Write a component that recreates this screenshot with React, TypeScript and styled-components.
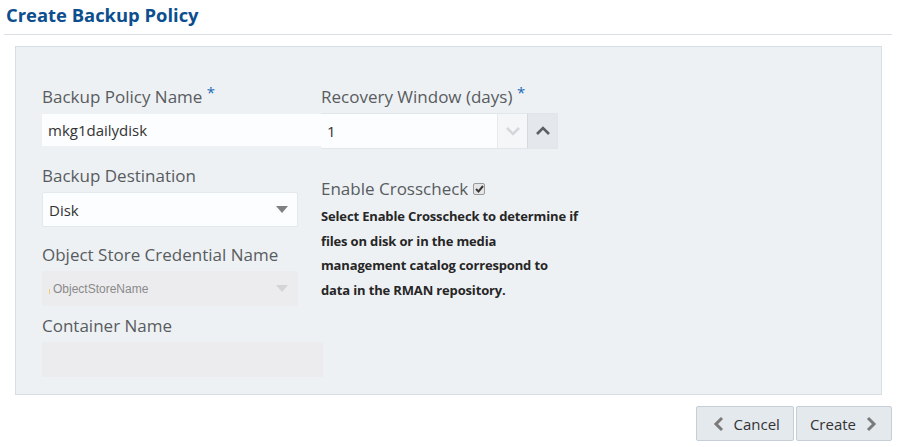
import styled, { createGlobalStyle } from "styled-components";

const GlobalStyle = createGlobalStyle`
  html, body {
    margin: 0;
    padding: 0;
    background: #ffffff;
  }
  body {
    font-family: "Open Sans", "Noto Sans", sans-serif;
  }
  * {
    box-sizing: border-box;
  }
`;

const colors = {
  title: "#0d4e8e",
  divider: "#d8e0e6",
  panel: "#eef1f4",
  panelBorder: "#d7dfe6",
  label: "#585c60",
  required: "#1b6ab8",
  text: "#333333",
  inputBg: "#fcfdfe",
  disabledBg: "#ececee",
  button: "#e4e9ee",
  buttonBorder: "#c6cfd7",
  icon: "#7a7a7a",
};

const ChevronLeft = ({ color = colors.icon }: { color?: string }) => (
  <svg width="13" height="16" viewBox="0 0 13 16">
    <path d="M10 2 L4 8 L10 14" fill="none" stroke={color} strokeWidth="3" />
  </svg>
);

const ChevronRight = ({ color = colors.icon }: { color?: string }) => (
  <svg width="13" height="16" viewBox="0 0 13 16">
    <path d="M3 2 L9 8 L3 14" fill="none" stroke={color} strokeWidth="3" />
  </svg>
);

const ChevronUp = ({ color }: { color: string }) => (
  <svg width="16" height="10" viewBox="0 0 16 10">
    <path d="M2 8 L8 2 L14 8" fill="none" stroke={color} strokeWidth="2.6" />
  </svg>
);

const ChevronDown = ({ color }: { color: string }) => (
  <svg width="16" height="10" viewBox="0 0 16 10">
    <path d="M2 2 L8 8 L14 2" fill="none" stroke={color} strokeWidth="2.6" />
  </svg>
);

const Caret = ({ color }: { color: string }) => (
  <svg width="12" height="8" viewBox="0 0 12 8">
    <path d="M0 0 H12 L6 7 Z" fill={color} />
  </svg>
);

const App = () => {
  return (
    <Page>
      <GlobalStyle />
      <Header>
        <Title>Create Backup Policy</Title>
      </Header>
      <Panel>
        <LeftColumn>
          <Field gapAfter={18}>
            <Label>
              Backup Policy Name <Required>*</Required>
            </Label>
            <TextInput width={279} defaultValue="mkg1dailydisk" />
          </Field>
          <Field gapAfter={16}>
            <Label>Backup Destination</Label>
            <Select width={256}>
              <SelectValue>Disk</SelectValue>
              <Caret color="#808080" />
            </Select>
          </Field>
          <Field gapAfter={8}>
            <Label>Object Store Credential Name</Label>
            <Select width={256} disabled>
              <SelectValue disabled>
                <Cursor />
                ObjectStoreName
              </SelectValue>
              <Caret color="#d4d4d6" />
            </Select>
          </Field>
          <Field gapAfter={0}>
            <Label>Container Name</Label>
            <DisabledInput width={281} />
          </Field>
        </LeftColumn>
        <RightColumn>
          <Field gapAfter={28}>
            <Label>
              Recovery Window (days) <Required>*</Required>
            </Label>
            <Spinner>
              <SpinnerInput defaultValue="1" />
              <SpinButton muted>
                <ChevronDown color="#d5d8db" />
              </SpinButton>
              <SpinButton>
                <ChevronUp color="#5a5f64" />
              </SpinButton>
            </Spinner>
          </Field>
          <CheckLabel>
            Enable Crosscheck
            <CheckBox>
              <svg width="9" height="8" viewBox="0 0 9 8">
                <path
                  d="M1 4 L3.5 6.5 L8 1"
                  fill="none"
                  stroke="#3a3a3a"
                  strokeWidth="2"
                />
              </svg>
            </CheckBox>
          </CheckLabel>
          <HelpText>
            Select Enable Crosscheck to determine if
            <br />
            files on disk or in the media
            <br />
            management catalog correspond to
            <br />
            data in the RMAN repository.
          </HelpText>
        </RightColumn>
      </Panel>
      <Footer>
        <Button side="left">
          <ChevronLeft />
          Cancel
        </Button>
        <Button side="right">
          Create
          <ChevronRight />
        </Button>
      </Footer>
    </Page>
  );
};

const Page = styled.div`
  width: 897px;
  padding: 0 5px 0 4px;
`;

const Header = styled.div`
  height: 35px;
  padding: 3px 0 0 2px;
  border-bottom: 1px solid ${colors.divider};
`;

const Title = styled.h1`
  margin: 0;
  color: ${colors.title};
  font-size: 18.4px;
  font-weight: 700;
  line-height: 24px;
`;

const Panel = styled.div`
  display: flex;
  width: 867px;
  height: 349px;
  margin: 11px 0 0 11px;
  padding: 38px 0 0 26px;
  background: ${colors.panel};
  border: 1px solid ${colors.panelBorder};
`;

const LeftColumn = styled.div`
  display: flex;
  flex-direction: column;
  width: 279px;
`;

const RightColumn = styled.div`
  display: flex;
  flex-direction: column;
`;

const Field = styled.div<{ gapAfter: number }>`
  display: flex;
  flex-direction: column;
  align-items: flex-start;
  gap: 4px;
  margin-bottom: ${({ gapAfter }) => gapAfter}px;
`;

const Label = styled.label`
  color: ${colors.label};
  font-size: 17px;
  line-height: 24px;
  white-space: nowrap;
`;

const Required = styled.span`
  position: relative;
  top: -5px;
  color: ${colors.required};
  font-size: 15px;
`;

const TextInput = styled.input<{ width: number }>`
  width: ${({ width }) => width}px;
  height: 32px;
  margin-top: 1px;
  padding: 0 6px;
  border: none;
  background: ${colors.inputBg};
  color: ${colors.text};
  font-family: inherit;
  font-size: 15px;
  outline: none;
`;

const DisabledInput = styled.div<{ width: number }>`
  width: ${({ width }) => width}px;
  height: 35px;
  background: ${colors.disabledBg};
`;

const Select = styled.div<{ width: number; disabled?: boolean }>`
  display: flex;
  align-items: center;
  justify-content: space-between;
  width: ${({ width }) => width}px;
  height: 35px;
  padding: 0 9px 0 6px;
  background: ${({ disabled }) => (disabled ? colors.disabledBg : colors.inputBg)};
  border: 1px solid ${({ disabled }) => (disabled ? colors.disabledBg : "#e3e8ec")};
  border-radius: 2px;
`;

const SelectValue = styled.span<{ disabled?: boolean }>`
  display: flex;
  align-items: center;
  gap: 3px;
  color: ${({ disabled }) => (disabled ? "#8a8a8a" : colors.text)};
  font-family: ${({ disabled }) =>
    disabled ? `"Liberation Sans", Arial, sans-serif` : "inherit"};
  font-size: ${({ disabled }) => (disabled ? "12px" : "15px")};
`;

const Cursor = styled.span`
  width: 1px;
  height: 5px;
  margin-top: 6px;
  background: #f3c97a;
`;

const Spinner = styled.div`
  display: flex;
  height: 36px;
  border: 1px solid #e1e6ea;
  border-left: none;
`;

const SpinnerInput = styled.input`
  width: 176px;
  height: 34px;
  padding: 0 6px;
  border: none;
  background: ${colors.inputBg};
  color: ${colors.text};
  font-family: inherit;
  font-size: 15px;
  outline: none;
`;

const SpinButton = styled.div<{ muted?: boolean }>`
  display: flex;
  align-items: center;
  justify-content: center;
  width: 30px;
  height: 34px;
  background: ${({ muted }) => (muted ? "#f4f6f7" : "#e4e8ec")};
  border-left: 1px solid ${({ muted }) => (muted ? "#e6eaed" : "#d3d9de")};
`;

const CheckLabel = styled.div`
  display: flex;
  align-items: center;
  gap: 5px;
  color: ${colors.label};
  font-size: 17px;
  line-height: 24px;
`;

const CheckBox = styled.span`
  display: inline-flex;
  align-items: center;
  justify-content: center;
  width: 12px;
  height: 12px;
  border: 1px solid #9a9a9a;
  border-radius: 2px;
  background: #e6e6e6;
`;

const HelpText = styled.p`
  margin: 3px 0 0;
  color: #262626;
  font-size: 13px;
  font-weight: 700;
  letter-spacing: -0.15px;
  line-height: 24.6px;
`;

const Footer = styled.div`
  display: flex;
  justify-content: flex-end;
  gap: 2px;
  margin-top: 11px;
`;

const Button = styled.button<{ side: "left" | "right" }>`
  display: flex;
  align-items: center;
  gap: 9px;
  height: 35px;
  padding: ${({ side }) => (side === "left" ? "0 13px 0 15px" : "0 13px")};
  margin: 0;
  background: ${colors.button};
  border: 1px solid ${colors.buttonBorder};
  border-radius: 2px;
  color: #333333;
  font-family: inherit;
  font-size: 15px;
`;

export default App;
